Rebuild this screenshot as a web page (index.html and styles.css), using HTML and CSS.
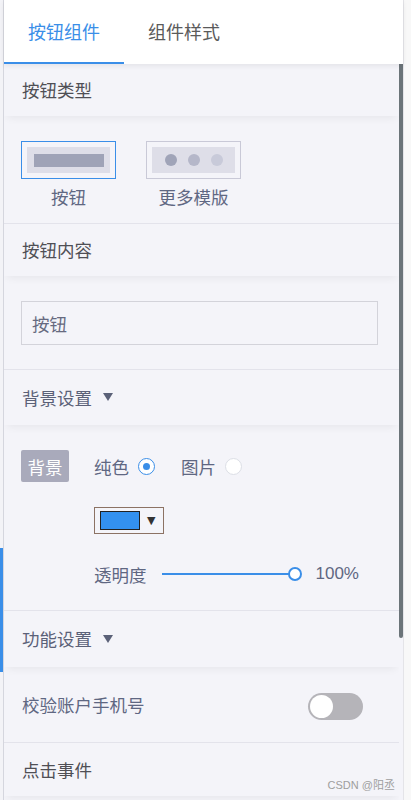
FILE: index.html
```html
<!DOCTYPE html>
<html lang="zh">
<head>
<meta charset="utf-8">
<title>按钮组件</title>
<link rel="stylesheet" href="styles.css">
</head>
<body>
<div class="rail"><span class="rail-mark"></span></div>
<div class="app">
  <nav class="tabs">
    <div class="tab active">按钮组件</div>
    <div class="tab">组件样式</div>
  </nav>
  <div class="main">
    <div class="panel">
      <div class="sec-head">按钮类型</div>
      <div class="templates">
        <div class="tpl">
          <div class="tpl-box selected"><div class="tpl-inner"><span class="tpl-bar"></span></div></div>
          <div class="tpl-label">按钮</div>
        </div>
        <div class="tpl">
          <div class="tpl-box"><div class="tpl-inner dots"><span class="dot d1"></span><span class="dot d2"></span><span class="dot d3"></span></div></div>
          <div class="tpl-label">更多模版</div>
        </div>
      </div>
      <div class="sec-head">按钮内容</div>
      <div class="input-sec">
        <div class="text-input">按钮</div>
      </div>
      <div class="sec-head tall">背景设置 <span class="caret"></span></div>
      <div class="bg-sec">
        <div class="bg-row">
          <span class="tag">背景</span>
          <span class="opt">纯色</span><span class="radio checked"></span>
          <span class="opt second">图片</span><span class="radio"></span>
        </div>
        <div class="picker"><span class="swatch"></span><span class="picker-arrow">▼</span></div>
        <div class="slider-row">
          <span class="opt">透明度</span>
          <div class="slider"><span class="track"></span><span class="knob"></span></div>
          <span class="pct">100%</span>
        </div>
      </div>
      <div class="sec-head taller">功能设置 <span class="caret"></span></div>
      <div class="toggle-row">
        <span class="row-label">校验账户手机号</span>
        <span class="switch"><span class="switch-knob"></span></span>
      </div>
      <div class="sec-head last">点击事件</div>
    </div>
    <div class="scrollbar"><div class="thumb"></div></div>
  </div>
</div>
<div class="edge"></div>
<div class="watermark">CSDN @阳丞</div>
</body>
</html>
```
FILE: styles.css
```css
* { box-sizing: border-box; }
html, body { margin: 0; padding: 0; }
body {
  width: 411px;
  height: 800px;
  overflow: hidden;
  display: flex;
  position: relative;
  background: #ffffff;
  font-family: "Noto Sans CJK SC", "Liberation Sans", sans-serif;
  font-size: 17.5px;
}
.rail {
  width: 3px;
  display: flex;
  flex-direction: column;
  background: #f3f3f7;
}
.rail-mark {
  display: block;
  margin-top: 548px;
  height: 124px;
  background: #3a8ee8;
}
.app {
  width: 400px;
  border-left: 1px solid #d5d6de;
  display: flex;
  flex-direction: column;
  height: 800px;
}
.tabs {
  height: 64px;
  flex: none;
  display: flex;
  background: #ffffff;
  position: relative;
  z-index: 3;
  box-shadow: 0 2px 5px rgba(0, 0, 0, 0.07);
}
.tab {
  width: 120px;
  height: 64px;
  line-height: 62px;
  text-align: center;
  font-size: 18px;
  color: #5a5a5a;
  border-bottom: 2px solid transparent;
}
.tab.active {
  color: #3a8ee8;
  border-bottom-color: #3a8ee8;
}
.main {
  flex: 1;
  display: flex;
  min-height: 0;
}
.panel {
  flex: 1;
  background: #f4f4f9;
  overflow: hidden;
}
.scrollbar {
  width: 4px;
  background: #f4f4f9;
  display: flex;
  flex-direction: column;
}
.thumb {
  height: 574px;
  background: #6b7479;
  border-radius: 0 0 2px 2px;
}
.edge {
  flex: 1;
  border-left: 1px solid #e4e4e8;
  background: #f8f8f8;
}
.sec-head {
  height: 52px;
  display: flex;
  align-items: center;
  padding: 0 18px 1px;
  color: #4f4f55;
  background: #f4f4f9;
  position: relative;
  z-index: 1;
  box-shadow: 0 5px 8px -3px rgba(0, 0, 0, 0.06);
}
.sec-head.tall { height: 55px; color: #5b6178; }
.sec-head.taller { height: 56px; color: #5b6178; }
.sec-head.last { height: 53px; }
.caret {
  display: inline-block;
  width: 0;
  height: 0;
  margin-left: 11px;
  border-left: 5px solid transparent;
  border-right: 5px solid transparent;
  border-top: 8px solid #5b6178;
}
.templates {
  display: flex;
  gap: 30px;
  padding: 25px 17px 13px;
  border-bottom: 1px solid #e3e3eb;
}
.tpl {
  display: flex;
  flex-direction: column;
  align-items: center;
}
.tpl-box {
  width: 95px;
  height: 38px;
  border: 1px solid #c9c9d7;
  padding: 5px;
  background: #f4f4f9;
}
.tpl-box.selected { border-color: #3a8ee8; }
.tpl-inner {
  height: 26px;
  background: #dedee8;
  display: flex;
  align-items: center;
  justify-content: center;
}
.tpl-bar {
  width: 70px;
  height: 13px;
  background: #9fa3b7;
}
.dots { gap: 11px; }
.dot {
  width: 12px;
  height: 12px;
  border-radius: 50%;
}
.d1 { background: #a0a4b8; }
.d2 { background: #b5b7c9; }
.d3 { background: #c8cad9; }
.tpl-label {
  margin-top: 7px;
  height: 24px;
  line-height: 22px;
  color: #5f6782;
}
.input-sec {
  padding: 25px 21px 24px 17px;
  border-bottom: 1px solid #e3e3eb;
}
.text-input {
  height: 44px;
  border: 1px solid #d3d3da;
  padding-left: 10px;
  display: flex;
  align-items: center;
  color: #666a80;
}
.bg-sec {
  padding: 25px 17px 24px;
  border-bottom: 1px solid #e3e3eb;
}
.bg-row {
  height: 32px;
  display: flex;
  align-items: center;
}
.tag {
  width: 48px;
  height: 32px;
  border-radius: 2px;
  background: #a9aabb;
  color: #ffffff;
  display: flex;
  align-items: center;
  justify-content: center;
  margin-right: 25px;
}
.opt { color: #5f6782; }
.opt.second { margin-left: 26px; }
.radio {
  width: 17px;
  height: 17px;
  border-radius: 50%;
  border: 1px solid #dcdfe6;
  background: #ffffff;
  margin-left: 9px;
  display: flex;
  align-items: center;
  justify-content: center;
}
.radio.checked { border-color: #3a8ee8; }
.radio.checked::after {
  content: "";
  width: 7px;
  height: 7px;
  border-radius: 50%;
  background: #3a8ee8;
}
.picker {
  margin: 25px 0 0 73px;
  width: 70px;
  height: 27px;
  border: 1px solid #8c7264;
  display: flex;
  align-items: center;
  padding-left: 5px;
}
.swatch {
  width: 40px;
  height: 19px;
  border: 1px solid #222222;
  background: #3391f0;
}
.picker-arrow {
  margin-left: 7px;
  font-size: 11px;
  color: #333333;
  font-family: "DejaVu Sans", sans-serif;
}
.slider-row {
  margin: 28px 0 0 73px;
  height: 24px;
  display: flex;
  align-items: center;
}
.slider {
  width: 140px;
  margin-left: 15px;
  display: flex;
  align-items: center;
}
.track {
  width: 129px;
  height: 2px;
  background: #3a8ee8;
}
.knob {
  width: 14px;
  height: 14px;
  border-radius: 50%;
  border: 2px solid #3a8ee8;
  background: #ffffff;
  margin-left: -1px;
}
.pct {
  margin-left: 14px;
  color: #5f6782;
  font-family: "Liberation Sans", sans-serif;
  font-size: 17px;
}
.toggle-row {
  height: 76px;
  border-bottom: 1px solid #e3e3eb;
  display: flex;
  align-items: center;
  justify-content: space-between;
  padding: 0 36px 0 18px;
}
.row-label { color: #5f6782; }
.switch {
  width: 55px;
  height: 27px;
  margin-top: 3px;
  border-radius: 14px;
  background: #b5b4b9;
  padding: 2px;
  display: flex;
}
.switch-knob {
  width: 23px;
  height: 23px;
  border-radius: 50%;
  background: #ffffff;
}
.watermark {
  position: absolute;
  z-index: 5;
  right: 16px;
  bottom: 8px;
  font-size: 11px;
  color: #9e9e9e;
  font-family: "Liberation Sans", "Noto Sans CJK SC", sans-serif;
}
```
